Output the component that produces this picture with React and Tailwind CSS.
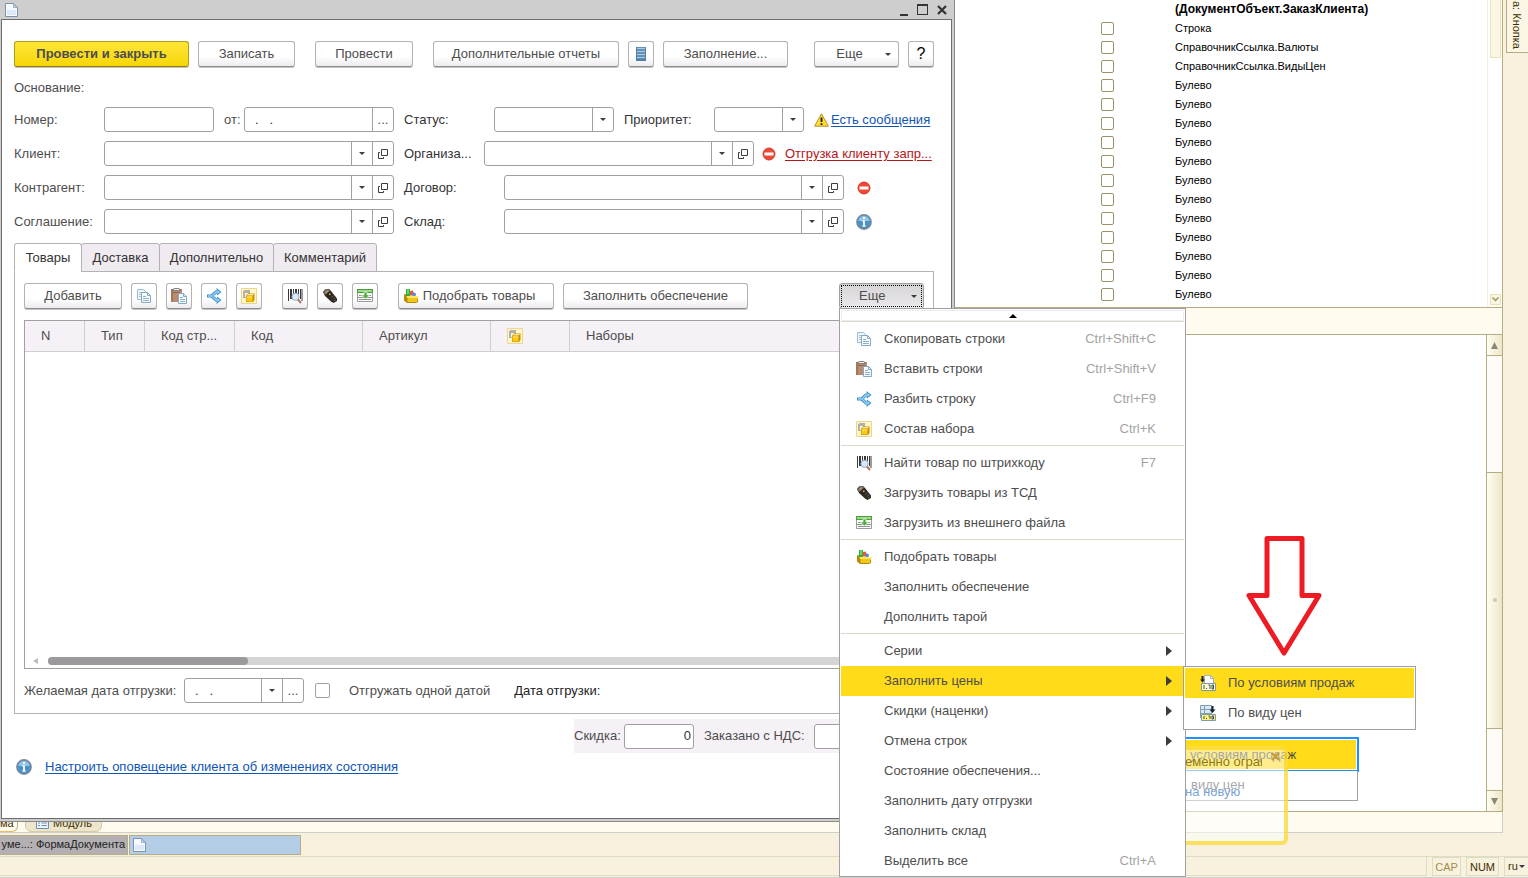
import React from 'react';

/* ---------- icons ---------- */

const PageIcon = () => (
  <svg width="13" height="14" viewBox="0 0 13 14" className="block shrink-0">
    <path d="M.5.5h8l4 4v9H.5z" fill="#f6faff" stroke="#7d93ab" />
    <path d="M2 7h9v5H2z" fill="#dce9f8" />
    <path d="M8.5.5v4h4z" fill="#b4cde6" stroke="#7d93ab" strokeWidth=".6" />
  </svg>
);

const CopyIcon = () => (
  <svg width="16" height="16" viewBox="0 0 16 16" className="block shrink-0">
    <path d="M1.500 1.500h6l2 2v8h-8z" fill="#eef5fa" stroke="#9dbdd2" />
    <path d="M3 4.500h3M3 6.500h3M3 8.500h2" stroke="#a9c6d9" />
    <path d="M5.500 4.500h6l3 3v7h-9z" fill="#fafdff" stroke="#86a9c1" />
    <path d="M11.500 4.500v3h3" fill="none" stroke="#86a9c1" />
    <path d="M7 8.500h3M7 10.500h6M7 12.500h6" stroke="#8db0c8" />
  </svg>
);

const PasteIcon = () => (
  <svg width="16" height="16" viewBox="0 0 16 16" className="block shrink-0">
    <path d="M0 1h11v13H0z" fill="#b98c70" />
    <path d="M0 1h2v13H0z" fill="#a27659" />
    <path d="M1 3V1.500L3.500 0h4L10 1.500V3z" fill="#84837f" />
    <path d="M3 1h5v1H3z" fill="#f0efea" />
    <path d="M2 4h7v1H2z" fill="#94664a" />
    <path d="M7.500 5.500h5l3 3v7h-8z" fill="#f7fbff" stroke="#86a9c1" />
    <path d="M12.500 5.500v3h3" fill="none" stroke="#86a9c1" />
    <path d="M9 9.500h3M9 11.500h5M9 13.500h5" stroke="#8db0c8" />
  </svg>
);

const SplitIcon = () => (
  <svg width="16" height="16" viewBox="0 0 16 16" className="block shrink-0">
    <g fill="none" stroke="#3d8ec6" strokeWidth="3.200">
      <path d="M1 8h4.500L10 4h2M5.500 8 10 12h2" />
    </g>
    <path d="M10.500 0 15.500 4l-4.500 3.500zM10.500 16l5-4L11 8.500z" fill="#3d8ec6" />
    <g fill="none" stroke="#93d3f6" strokeWidth="1.400">
      <path d="M2 8h4l4-4h3M6 8l4 4h3" />
    </g>
    <path d="m11.500 2 2.500 2-2.500 2zM11.500 14l2.500-2-2.500-2z" fill="#93d3f6" />
  </svg>
);

const KitIcon = () => (
  <svg width="16" height="16" viewBox="0 0 16 16" className="block shrink-0">
    <path d="M.5.5h15v15H.5z" fill="#fff6cd" stroke="#ecd68b" />
    <path d="M2 3h1V2h6v5H7v3H2z" fill="#b0b0ae" />
    <path d="M4 5h3v4H4z" fill="#fdf6da" />
    <path d="M5 7.500 7 5.500h6.500V12L12 14H5z" fill="#c98f00" />
    <path d="M5.500 7.500 7.200 6H13l-1.500 1.500z" fill="#ffe98a" />
    <path d="M5.500 8H11.500v5.500h-6z" fill="#fbc814" />
    <path d="M6 8.500h5V10H6z" fill="#ffdc50" />
  </svg>
);

const BarcodeIcon = () => (
  <svg width="16" height="16" viewBox="0 0 16 16" className="block shrink-0">
    <path d="M1 1h1v12H1zM3 1h2v10H3zM6 1h1v10H6zM8 1h2v5H8zM11 1h1v5h-1zM13 1h1v10h-1zM14.500 1h1v12h-1z" fill="#3a3a3a" />
    <circle cx="8.500" cy="8.800" r="3.600" fill="#dce9f8" stroke="#92a8c6" />
    <path d="m11 11.500 3 3.500" stroke="#b0785e" strokeWidth="2" />
  </svg>
);

const TerminalIcon = () => (
  <svg width="16" height="16" viewBox="0 0 16 16" className="block shrink-0">
    <path d="M1 4 3 1.500 7 1l2 2 6 7.500V13l-3.500 2L9 13.500 3 8z" fill="#2f2822" />
    <path d="M1.500 4 3.500 2l3.500-.5 1 1L4.500 6 3 7z" fill="#75685b" />
    <path d="m3 4 3-2 1 .8L4 5.500z" fill="#a89a8b" />
    <path d="M7 5.500h1.500V7H7z" fill="#e8b83a" />
    <path d="m9 9.500 2.500-1.800M10.500 11.500 13 9.700M12 13l2-1.500" stroke="#6b635b" strokeWidth=".8" />
  </svg>
);

const ImportIcon = () => (
  <svg width="16" height="16" viewBox="0 0 16 16" className="block shrink-0">
    <path d="M.5 2.500h15v11H.5z" fill="#fafaf9" stroke="#9a9e9a" />
    <path d="M0 1h16v4H0z" fill="#4c9e3a" />
    <path d="M1 2h14v2H1z" fill="#9bd98b" />
    <path d="M2 7.500h4M11 7.500h3M0 9.500h16M2 11.500h12" stroke="#8f9490" />
    <path d="M7 4h3v3h2.500l-4 4-4-4H7z" fill="#4fae3b" stroke="#fff" strokeWidth=".6" />
  </svg>
);

const BasketIcon = () => (
  <svg width="16" height="16" viewBox="0 0 16 16" className="block shrink-0">
    <path d="M3 1h4v7H3z" fill="#2fae3c" />
    <path d="M4 1h2v5H4z" fill="#62d865" />
    <path d="m7 3 3-.5.5 5H7z" fill="#e8573f" />
    <path d="m10 4 3 1.500-.5 3H9.500z" fill="#4c8edb" />
    <path d="M1 6.500 3 6v2l2 1.500h10V14l-2 1H4l-3-2.500z" fill="#b88a06" />
    <path d="M4.500 9H15v2l-1 .5V14H4.500z" fill="#eec71a" />
    <path d="M4 8h11.500v1.800H4z" fill="#ffe96a" />
  </svg>
);

const ReportIcon = () => (
  <svg width="10" height="14" viewBox="0 0 10 14" className="block shrink-0">
    <path d="M0 0h10v14H0z" fill="#4f7fa6" />
    <path d="M1 1.500h8M1 4.500h8M1 7.500h8M1 10.500h8" stroke="#a9c9e2" strokeWidth="1.500" />
  </svg>
);

const WarningIcon = () => (
  <svg width="15" height="14" viewBox="0 0 15 14" className="block shrink-0">
    <path d="M7.500.8 14.400 13.200H.6z" fill="#ffdc2e" stroke="#b8912a" strokeLinejoin="round" />
    <path d="M7.500 4.500v4.500M7.500 10.300v1.700" stroke="#1c1c1c" strokeWidth="1.800" />
  </svg>
);

const StopIcon = () => (
  <svg width="14" height="14" viewBox="0 0 14 14" className="block shrink-0">
    <circle cx="7" cy="7" r="6" fill="#ee4a35" stroke="#d23a28" />
    <path d="M2.500 5.500h9v3h-9z" fill="#fff" />
  </svg>
);

const InfoIcon = () => (
  <svg width="16" height="16" viewBox="0 0 16 16" className="block shrink-0">
    <circle cx="8" cy="8" r="7.200" fill="#4a92c6" stroke="#7c8a97" strokeWidth="1.400" />
    <path d="M2.500 7a5.500 5 0 0 1 11 0z" fill="#94c6ea" />
    <path d="M8 3v2M6.500 7H8v5M6.500 12h3" stroke="#fff" strokeWidth="1.700" fill="none" />
  </svg>
);

const PriceTermsIcon = () => (
  <svg width="16" height="16" viewBox="0 0 16 16" className="block shrink-0">
    <path d="M4.500.5h6l3 3v7h-9z" fill="#fff" stroke="#9fb3c4" />
    <path d="M10.500.5v3h3" fill="none" stroke="#9fb3c4" />
    <path d="M2.500 1v4" stroke="#14232e" strokeWidth="2" />
    <path d="M0 4.500h5L2.500 7.500z" fill="#14232e" />
    <path d="M1.500 8.500h14v7h-14z" fill="#fffbd0" stroke="#7f9aa8" />
    <path d="M4 10v4M6.500 13v1M8.500 10h1.500v4M12 10h1.500v4H12z" fill="none" stroke="#37505e" />
  </svg>
);

const PriceKindIcon = () => (
  <svg width="16" height="16" viewBox="0 0 16 16" className="block shrink-0">
    <path d="M.5.5h11v12H.5z" fill="#dbe8f1" stroke="#7f9fb5" />
    <path d="M.5 4.500h11M.5 8.500h11M4.500.5v12" stroke="#7f9fb5" />
    <path d="M12.500 1v5" stroke="#14232e" strokeWidth="2" />
    <path d="M9.500 4.500h6l-3 3.500z" fill="#14232e" />
    <path d="M1.500 9.500h14v6h-14z" fill="#fff27c" stroke="#7f9aa8" />
    <path d="M4 11v3M6.500 13v1M8.500 11h1.500v3M12 11h1.500v3H12z" fill="none" stroke="#37505e" />
  </svg>
);

const ModuleIcon = () => (
  <svg width="13" height="12" viewBox="0 0 13 12" className="block shrink-0">
    <path d="M.5.5h12v11H.5z" fill="#eef4fb" stroke="#6f8fb5" />
    <path d="M2 3.500h2M5.500 3.500H11M2 6h2M5.500 6H11M2 8.500h2M5.500 8.500H11" stroke="#6f8fb5" />
  </svg>
);

const Caret = () => (
  <svg width="6" height="3" viewBox="0 0 6 3" className="block shrink-0">
    <path d="M0 0h6L3 3z" fill="#3c3c3c" />
  </svg>
);

const OpenIcon = () => (
  <svg width="10" height="10" viewBox="0 0 10 10" className="block shrink-0">
    <path d="M3.500.5h6v6h-6z" fill="none" stroke="#3c3c3c" />
    <path d="M2 3.500H.5v6h5V8" fill="none" stroke="#3c3c3c" />
  </svg>
);

/* ---------- form controls ---------- */

const buttonLook =
  'flex h-[26px] shrink-0 items-center justify-center rounded-[3px] border border-[#b4b2b4] border-b-[#8f8d8f] bg-gradient-to-b from-white from-60% to-[#eeebef] text-[#4d4d4d] shadow-[0_1px_0_#c4c2c4]';

const Button = ({ className = '', children, ...rest }) => (
  <button type="button" className={`${buttonLook} ${className}`} {...rest}>
    {children}
  </button>
);

const IconButton = ({ label, children }) => (
  <Button className="w-[26px]" aria-label={label}>{children}</Button>
);

// Text box with optional drop-down, dots and open buttons on its right side
const Field = ({ id, className = '', inputClass = 'px-[10px]', value = '', list, dots, open }) => (
  <div className={`flex h-[25px] min-w-0 rounded-[3px] border border-[#a0a0a0] bg-white ${className}`}>
    <input id={id} defaultValue={value} className={`min-w-0 flex-1 bg-transparent text-[#333] outline-none ${inputClass}`} />
    {list && (
      <button type="button" aria-label="Выбрать из списка" className="flex w-[21px] items-center justify-center border-l border-[#a0a0a0]">
        <Caret />
      </button>
    )}
    {dots && (
      <button type="button" aria-label="Выбрать" className="w-[21px] border-l border-[#a0a0a0] leading-[24px]">...</button>
    )}
    {open && (
      <button type="button" aria-label="Открыть" className="flex w-[21px] items-center justify-center border-l border-[#a0a0a0]">
        <OpenIcon />
      </button>
    )}
  </div>
);

const SelectField = ({ id, className = '' }) => (
  <div className={`flex h-[25px] min-w-0 rounded-[3px] border border-[#a0a0a0] bg-white ${className}`}>
    <select id={id} className="min-w-0 flex-1 appearance-none bg-transparent outline-none"></select>
    <span className="pointer-events-none flex w-[21px] items-center justify-center border-l border-[#a0a0a0]">
      <Caret />
    </span>
  </div>
);

const Label = ({ htmlFor, className = '', children }) => (
  <label htmlFor={htmlFor} className={`shrink-0 whitespace-nowrap ${className}`}>{children}</label>
);

/* ---------- menus ---------- */

const menuGroups = [
  [
    { text: 'Скопировать строки', keys: 'Ctrl+Shift+C', icon: <CopyIcon /> },
    { text: 'Вставить строки', keys: 'Ctrl+Shift+V', icon: <PasteIcon /> },
    { text: 'Разбить строку', keys: 'Ctrl+F9', icon: <SplitIcon /> },
    { text: 'Состав набора', keys: 'Ctrl+K', icon: <KitIcon /> },
  ],
  [
    { text: 'Найти товар по штрихкоду', keys: 'F7', icon: <BarcodeIcon /> },
    { text: 'Загрузить товары из ТСД', icon: <TerminalIcon /> },
    { text: 'Загрузить из внешнего файла', icon: <ImportIcon /> },
  ],
  [
    { text: 'Подобрать товары', icon: <BasketIcon /> },
    { text: 'Заполнить обеспечение' },
    { text: 'Дополнить тарой' },
  ],
  [
    { text: 'Серии', sub: true },
    { text: 'Заполнить цены', sub: true, active: true },
    { text: 'Скидки (наценки)', sub: true },
    { text: 'Отмена строк', sub: true },
    { text: 'Состояние обеспечения...' },
    { text: 'Заполнить дату отгрузки' },
    { text: 'Заполнить склад' },
    { text: 'Выделить все', keys: 'Ctrl+A' },
  ],
];

const PriceSubmenu = () => (
  <div className="absolute top-0 left-full -ml-px w-[233px] border border-[#a0a0a0] bg-white p-px" role="menu">
    <button type="button" className="flex h-[30px] w-full items-center gap-3 bg-[#ffdb1a] pl-[15px]">
      <PriceTermsIcon /> По условиям продаж
    </button>
    <button type="button" className="flex h-[30px] w-full items-center gap-3 pl-[15px]">
      <PriceKindIcon /> По виду цен
    </button>
  </div>
);

const MoreMenu = () => (
  <div className="absolute top-[25px] left-0 z-30 w-[347px] border border-[#a0a0a0] bg-white px-px pt-px text-left text-[#4d4d4d]" role="menu">
    <div className="flex h-[11px] items-center justify-center rounded-[2px] border border-[#ececf0]">
      <svg width="8" height="4" viewBox="0 0 8 4"><path d="M0 4h8L4 0z" fill="#000" /></svg>
    </div>
    {menuGroups.map((group, i) => (
      <div key={i} className={`border-t border-[#ddd8cc] ${i > 0 ? 'mt-px pt-[2px]' : 'pt-[2px]'}`}>
        {group.map(item => (
          <div key={item.text} className="relative">
            <button
              type="button"
              className={`flex h-[30px] w-full items-center pl-[15px] ${item.active ? 'bg-[#ffdb1a]' : ''} ${item.sub ? 'pr-3' : 'pr-7'}`}
            >
              <span className="w-7">{item.icon}</span>
              <span className="flex-1 text-left">{item.text}</span>
              <span className="text-[#a3a3a3]">{item.keys}</span>
              {item.sub && (
                <svg width="6" height="10" viewBox="0 0 6 10"><path d="M0 0v10l6-5z" fill="#3c3c3c" /></svg>
              )}
            </button>
            {item.active && <PriceSubmenu />}
          </div>
        ))}
      </div>
    ))}
  </div>
);

/* ---------- order form ---------- */

const OrderFields = () => (
  <div className="mt-[9px] grid grid-cols-[minmax(0,380fr)_minmax(0,530fr)] gap-x-[10px] gap-y-[9px]">
    <div className="flex items-center">
      <Label htmlFor="number" className="w-[90px]">Номер:</Label>
      <Field id="number" className="w-[110px]" />
      <Label htmlFor="date" className="ml-[10px] w-5">от:</Label>
      <Field id="date" className="flex-1" value=".   ." dots />
    </div>
    <div className="flex items-center text-[#333]">
      <Label htmlFor="status" className="w-[90px]">Статус:</Label>
      <SelectField id="status" className="flex-1" />
      <Label htmlFor="priority" className="ml-[10px] w-[90px]">Приоритет:</Label>
      <SelectField id="priority" className="w-[90px]" />
      <div className="flex w-[130px] items-center gap-[2px] pl-[10px] whitespace-nowrap">
        <WarningIcon />
        <a href="#messages" className="text-[#1155b5] underline underline-offset-2">Есть сообщения</a>
      </div>
    </div>

    <div className="flex items-center">
      <Label htmlFor="client" className="w-[90px]">Клиент:</Label>
      <Field id="client" className="flex-1" list open />
    </div>
    <div className="flex items-center text-[#333]">
      <Label htmlFor="company" className="w-[80px]">Организа...</Label>
      <Field id="company" className="flex-1" list open />
      <div className="flex w-[180px] items-center gap-[9px] pl-2 whitespace-nowrap">
        <StopIcon />
        <a href="#shipment" className="text-[#b5151b] underline underline-offset-2">Отгрузка клиенту запр...</a>
      </div>
    </div>

    <div className="flex items-center">
      <Label htmlFor="partner" className="w-[90px]">Контрагент:</Label>
      <Field id="partner" className="flex-1" list open />
    </div>
    <div className="flex items-center text-[#333]">
      <Label htmlFor="contract" className="w-[100px]">Договор:</Label>
      <Field id="contract" className="flex-1" list open />
      <div className="w-[90px] pl-[13px]"><StopIcon /></div>
    </div>

    <div className="flex items-center">
      <Label htmlFor="agreement" className="w-[90px]">Соглашение:</Label>
      <Field id="agreement" className="flex-1" list open />
    </div>
    <div className="flex items-center text-[#333]">
      <Label htmlFor="store" className="w-[100px]">Склад:</Label>
      <Field id="store" className="flex-1" list open />
      <div className="w-[90px] pl-3"><InfoIcon /></div>
    </div>
  </div>
);

const GoodsToolbar = () => (
  <div className="flex items-center gap-[9px]">
    <Button className="w-[98px]">Добавить</Button>
    <IconButton label="Скопировать"><CopyIcon /></IconButton>
    <IconButton label="Вставить"><PasteIcon /></IconButton>
    <IconButton label="Разбить"><SplitIcon /></IconButton>
    <IconButton label="Состав набора"><KitIcon /></IconButton>
    <div className="ml-[11px] flex gap-[9px]">
      <IconButton label="Найти по штрихкоду"><BarcodeIcon /></IconButton>
      <IconButton label="Загрузить из ТСД"><TerminalIcon /></IconButton>
      <IconButton label="Загрузить из файла"><ImportIcon /></IconButton>
    </div>
    <Button className="ml-[11px] w-[156px] gap-1 pr-[14px]"><BasketIcon /> Подобрать товары</Button>
    <Button className="w-[185px]">Заполнить обеспечение</Button>
    <div className="relative ml-auto">
      <button type="button" className="flex h-[26px] w-[85px] items-center rounded-[3px] border border-[#a0a0a0] bg-gradient-to-b from-[#d6d4d6] to-[#ebe9eb] p-px">
        <span className="flex h-full w-full items-center justify-between border border-dotted border-black pr-1 pl-[17px]">
          Еще <Caret />
        </span>
      </button>
      <MoreMenu />
    </div>
  </div>
);

const goodsColumns = [
  { title: 'N', width: 'w-[60px]' },
  { title: 'Тип', width: 'w-[60px]' },
  { title: 'Код стр...', width: 'w-[90px]' },
  { title: 'Код', width: 'w-[128px]' },
  { title: 'Артикул', width: 'w-[128px]' },
  { title: <KitIcon />, width: 'w-[79px]' },
  { title: 'Наборы', width: '' },
];

const GoodsTable = () => (
  <div className="mt-[11px] flex flex-1 flex-col border border-[#a0a0a0] bg-white">
    <table className="w-full table-fixed border-separate border-spacing-0">
      <thead>
        <tr className="h-[31px] bg-[#f5f1f6]">
          {goodsColumns.map((col, i) => (
            <th key={i} className={`border-r border-b border-[#cfcdcf] pl-4 text-left font-normal whitespace-nowrap last:border-r-0 ${col.width}`}>
              {col.title}
            </th>
          ))}
        </tr>
      </thead>
    </table>
    <div className="mt-auto flex h-[15px] items-center pl-2">
      <svg width="5" height="6" viewBox="0 0 5 6"><path d="M5 0v6L0 3z" fill="#bdbdbd" /></svg>
      <div className="ml-[10px] h-2 flex-1 rounded-full bg-[#d4d4d4]">
        <div className="h-2 w-[200px] rounded-full bg-[#9b999b]"></div>
      </div>
    </div>
  </div>
);

const tabs = [
  { name: 'Товары', width: 'w-[68px]' },
  { name: 'Доставка', width: 'w-[79px]' },
  { name: 'Дополнительно', width: 'w-[115px]' },
  { name: 'Комментарий', width: 'w-[104px]' },
];

const OrderWindow = () => (
  <section className="relative z-20 flex flex-1 flex-col border-r border-b border-[#8a8a8a] bg-[#cecece] pr-[2px] pb-[2px] pl-px">
    <header className="flex h-[19px] items-center pr-[5px] pl-1">
      <PageIcon />
      <div className="ml-auto flex items-center gap-[9px]">
        <button type="button" aria-label="Свернуть" className="flex h-3 items-end"><span className="h-[2px] w-2 bg-[#333]"></span></button>
        <button type="button" aria-label="Развернуть" className="h-[11px] w-[11px] border border-t-2 border-[#333]"></button>
        <button type="button" aria-label="Закрыть">
          <svg width="10" height="10" viewBox="0 0 10 10"><path d="m1 1 8 8M9 1 1 9" stroke="#333" strokeWidth="2.200" /></svg>
        </button>
      </div>
    </header>

    <div className="flex flex-1 flex-col border border-[#6d6d6d] bg-white pt-[21px] pr-[17px] pb-[41px] pl-3">
      <div className="flex items-center gap-[9px]">
        <button type="button" className="h-[26px] w-[175px] rounded-[3px] border border-[#b39b1c] border-b-[#8f7c12] bg-gradient-to-b from-[#ffe633] to-[#f7d600] font-bold text-[#4d4d4d] shadow-[0_1px_0_#c4c2c4]">
          Провести и закрыть
        </button>
        <Button className="w-[97px]">Записать</Button>
        <Button className="ml-[11px] w-[98px]">Провести</Button>
        <Button className="ml-[11px] w-[186px]">Дополнительные отчеты</Button>
        <IconButton label="Отчеты"><ReportIcon /></IconButton>
        <Button className="w-[125px]">Заполнение...</Button>
        <div className="ml-auto flex gap-[9px]">
          <Button className="w-[85px] gap-[22px] pl-[14px]">Еще <Caret /></Button>
          <Button className="w-[26px] text-base text-black">?</Button>
        </div>
      </div>

      <p className="mt-[11px] leading-5">Основание:</p>
      <OrderFields />

      <div className="relative z-10 mt-[9px] flex">
        {tabs.map((tab, i) => (
          <button
            key={tab.name}
            type="button"
            className={`-mr-px h-[29px] rounded-t-[3px] border text-[#333] ${tab.width} ${i === 0 ? 'border-[#b4b2b4] border-b-white bg-white' : 'border-[#b4b2b4] bg-[#efebf0]'}`}
          >
            {tab.name}
          </button>
        ))}
      </div>
      <div className="-mt-px flex flex-1 flex-col border border-[#b4b2b4] px-[9px] pt-[11px] pb-[10px]">
        <GoodsToolbar />
        <GoodsTable />
        <div className="mt-[9px] flex items-center whitespace-nowrap">
          <Label htmlFor="shipDate" className="w-[160px]">Желаемая дата отгрузки:</Label>
          <Field id="shipDate" className="w-[120px]" value=".   ." list dots />
          <input id="oneDate" type="checkbox" className="ml-[11px] h-[15px] w-[15px] appearance-none rounded-[2px] border border-[#a0a0a0]" />
          <Label htmlFor="oneDate" className="ml-[19px]">Отгружать одной датой</Label>
          <span className="ml-6 text-[#222]">Дата отгрузки:</span>
        </div>
      </div>

      <div className="mt-[5px] ml-[560px] flex h-[34px] items-center overflow-hidden bg-[#f5f1f6] whitespace-nowrap">
        <Label htmlFor="discount" className="w-[50px]">Скидка:</Label>
        <Field id="discount" className="w-[70px]" inputClass="px-[2px] text-right" value="0" />
        <Label htmlFor="total" className="ml-[10px] w-[110px]">Заказано с НДС:</Label>
        <Field id="total" className="flex-1" />
      </div>
      <div className="mt-1 flex h-5 items-center gap-[13px] pl-[2px]">
        <InfoIcon />
        <a href="#notify" className="text-[#1155b5] underline underline-offset-2">Настроить оповещение клиента об изменениях состояния</a>
      </div>
    </div>
  </section>
);

/* ---------- configurator behind the form ---------- */

const types = ['Строка', 'СправочникСсылка.Валюты', 'СправочникСсылка.ВидыЦен', ...Array(12).fill('Булево')];

const AttributeList = () => (
  <div className="flex h-[308px] border-r border-b border-[#b5ad84] bg-white">
    <table className="w-full table-fixed border-collapse self-start text-[11px] leading-[19px] text-black">
      <thead>
        <tr className="h-[19px]">
          <th className="w-[146px]"></th>
          <th className="w-[74px]"></th>
          <th className="text-left text-xs leading-[19px]">(ДокументОбъект.ЗаказКлиента)</th>
        </tr>
      </thead>
      <tbody>
        {types.map((type, i) => (
          <tr key={i} className="h-[19px]">
            <td></td>
            <td>
              <input type="checkbox" aria-label={type} className="block h-[13px] w-[13px] appearance-none rounded-[2px] border border-[#9c9268]" />
            </td>
            <td>{type}</td>
          </tr>
        ))}
      </tbody>
    </table>
    <div className="flex w-[15px] shrink-0 flex-col items-center justify-between border-l border-[#f3efdf] pb-[2px]">
      <div className="h-[58px] w-[11px] border border-t-0 border-[#ece3b4] bg-[#faf6e4]"></div>
      <button type="button" aria-label="Вниз" className="flex h-[11px] w-[11px] items-center justify-center border border-[#ece3b4] bg-[#faf6e4]">
        <svg width="7" height="5" viewBox="0 0 7 5"><path d="m.5.5 3 3 3-3" fill="none" stroke="#a0925a" strokeWidth="1.500" /></svg>
      </button>
    </div>
  </div>
);

// Fading copy of the submenu with a notification balloon over it
const Ghosts = () => (
  <>
    <div className="absolute top-[402px] left-[200px] w-[204px] border-2 border-[#1e90ff] bg-white p-px text-[#4d4d4d]">
      <div className="h-[29px] bg-[#ffdb1a] pl-[32px] leading-[30px]">условиям продаж</div>
    </div>
    <div className="absolute top-[436px] left-[200px] h-[30px] w-[203px] border border-t-0 border-[#a0a0a0] bg-white pl-[35px] leading-[28px] text-[#4d4d4d]">
      виду цен
    </div>
    <div className="absolute top-[411px] left-[200px] z-10 h-[99px] w-[133px] rounded-md border-4 border-[#fad000]/60 bg-white/50 pt-[2px] pl-[26px] leading-5">
      <div className="flex items-start justify-between pr-1">
        <span className="w-[77px] overflow-hidden whitespace-nowrap text-[#8c7a10]">еменно огран</span>
        <svg width="9" height="9" viewBox="0 0 9 9"><path d="m1 1 7 7M8 1 1 8" stroke="#c79a3a" strokeWidth="2.200" /></svg>
      </div>
      <a href="#new" className="mt-[10px] block text-[#7ba3d6]">на новую</a>
    </div>
  </>
);

const FormPreview = () => (
  <div className="relative flex flex-1 border-t border-r border-b border-[#b5ad84] bg-white">
    <Ghosts />
    <svg width="78" height="122" viewBox="0 0 78 122" className="absolute top-[200px] left-[290px]">
      <path d="M22 3.500h35v57h17L39 118 4 60.500h18z" fill="none" stroke="#ed1c24" strokeWidth="5" strokeLinejoin="round" />
    </svg>
    <div className="ml-auto flex w-4 flex-col border-l border-[#b5ad84] bg-[#fffcf8]">
      <button type="button" aria-label="Вверх" className="flex h-[21px] items-center justify-center border-b border-[#b5ad84] bg-gradient-to-r from-[#fffdf2] to-[#eee6c8]">
        <svg width="7" height="7" viewBox="0 0 7 7"><path d="M0 7h7L3.500 0z" fill="#8b8678" /></svg>
      </button>
      <div className="flex-[116]"></div>
      <div className="flex flex-[256] items-center justify-center border-y border-[#b5ad84] bg-gradient-to-r from-[#fffdf2] to-[#eee6c8]">
        <span className="h-1 w-1 rounded-full bg-[#cfc8ab]"></span>
      </div>
      <div className="flex-[61]"></div>
      <button type="button" aria-label="Вниз" className="flex h-[21px] items-center justify-center border-t border-[#b5ad84] bg-gradient-to-r from-[#fffdf2] to-[#eee6c8]">
        <svg width="7" height="7" viewBox="0 0 7 7"><path d="M0 0h7L3.500 7z" fill="#8b8678" /></svg>
      </button>
    </div>
  </div>
);

export default function App() {
  return (
    <div className="flex min-h-screen flex-col overflow-hidden bg-[#f8f1de] font-['Liberation_Sans',Arial,sans-serif] text-[13px] text-[#4d4d4d]">
      <main className="flex flex-1">
        <div className="flex w-[62.5%] shrink-0 flex-col">
          <OrderWindow />
          <div className="flex h-[11px] items-end gap-[7px] border-b border-[#d0cec8] bg-[#fffbee] text-[11px] text-[#3c2f00]">
            <button type="button" className="h-[18px] w-[18px] rounded-br-md border border-l-0 border-[#b5ad84] border-b-[#f4b860] bg-[#fffbee] text-left leading-4">ма</button>
            <button type="button" className="flex h-[18px] w-[77px] items-center gap-1 rounded-b-md border border-[#d5cba8] bg-[#ede5cc] pl-[10px]">
              <ModuleIcon /> Модуль
            </button>
          </div>
        </div>

        <div className="flex min-w-0 flex-1 flex-col border-b border-[#d0cec8] bg-[#fffbee]">
          <AttributeList />
          <div className="h-[26px] border-r border-[#b5ad84]"></div>
          <FormPreview />
          <div className="h-5 border-r border-[#d0cec8]"></div>
        </div>

        <aside className="w-[25px] shrink-0 pl-[3px]">
          <button type="button" className="flex h-[53px] w-full items-end justify-center border border-t-0 border-r-0 border-[#b5ad84] bg-[#faf5e4] pb-[2px] text-[11px] text-[#3c2f00] [writing-mode:vertical-rl]">
            <span className="leading-5">а: Кнопка</span>
          </button>
        </aside>
      </main>

      <nav className="flex h-6 items-center border-b border-[#deddc4] bg-[#f7f0dc] text-[11px] text-[#222]">
        <button type="button" className="flex h-5 w-[128px] items-center justify-end border border-l-0 border-[#b5ad84] bg-[#b3afb2] pr-[2px] whitespace-nowrap">уме...: ФормаДокумента</button>
        <button type="button" aria-label="Документ" className="ml-px flex h-5 w-[172px] items-center border border-[#b5ad84] bg-[#b4cde6] pl-[3px]"><PageIcon /></button>
      </nav>
      <footer className="flex h-[21px] gap-[5px] border-b border-[#cfcdcf] pb-px text-[11px] text-[#3c2f00]">
        <span className="flex-1 border-r border-b border-[#deddc4]"></span>
        <span className="w-[29px] border border-[#deddc4] text-center leading-[18px] text-[#a08c50]">CAP</span>
        <span className="w-[33px] border border-[#deddc4] text-center leading-[18px]">NUM</span>
        <button type="button" className="flex w-6 items-center gap-px border border-r-0 border-[#deddc4] pl-[3px]">ru <Caret /></button>
      </footer>
    </div>
  );
}
